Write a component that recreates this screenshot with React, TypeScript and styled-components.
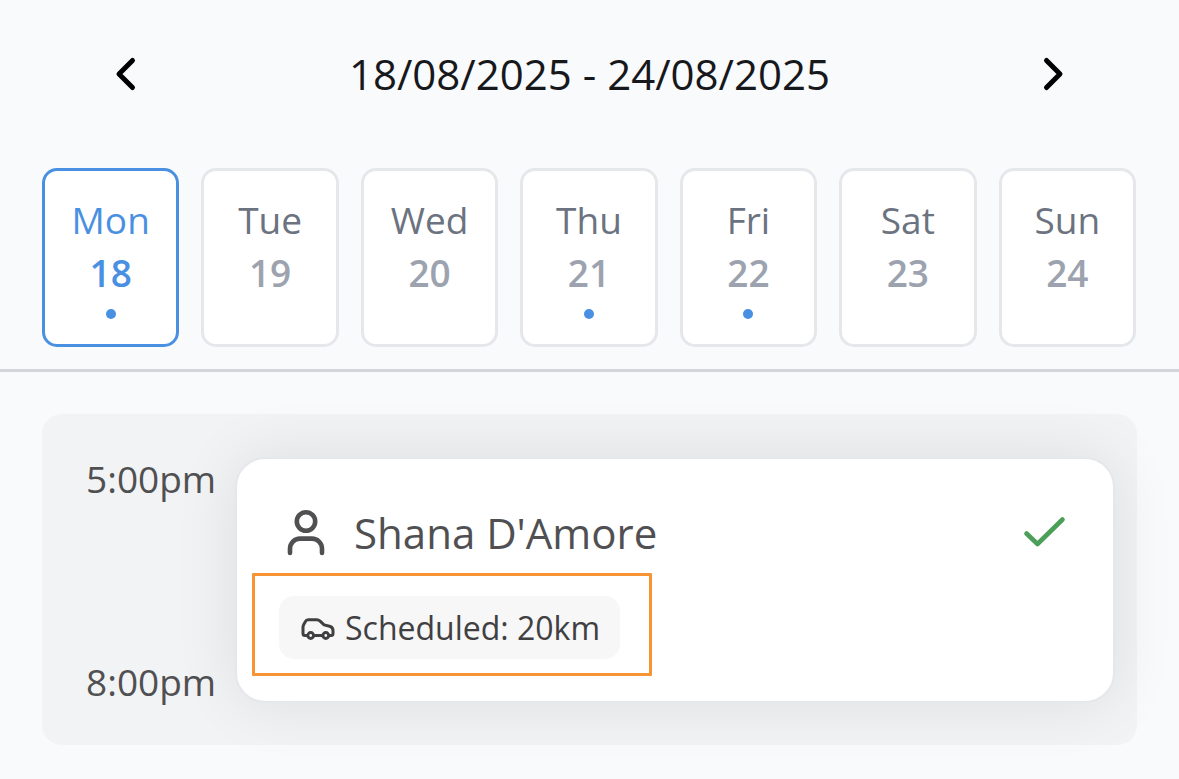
import React from "react";
import styled, { createGlobalStyle } from "styled-components";

const colors = {
  page: "#f9fafc",
  raised: "#f9fafb",
  panel: "#f2f3f5",
  border: "#e5e7eb",
  divider: "#d2d5db",
  blue: "#4a90e2",
  orange: "#f79433",
  green: "#4c9f58",
};

const GlobalStyle = createGlobalStyle`
  *, *::before, *::after { box-sizing: border-box; }
  body {
    margin: 0;
    background: ${colors.page};
    color: #505052;
    font-family: "Open Sans", "Noto Sans", sans-serif;
  }
`;

const Page = styled.div`
  min-height: 100vh;
  overflow-x: hidden;
`;

const Header = styled.header`
  padding: 10px 42px 22px;
  border-bottom: 3px solid ${colors.divider};
`;

const WeekNav = styled.nav`
  display: flex;
  align-items: center;
  justify-content: space-between;
  padding: 0 38px;
`;

const NavButton = styled.button`
  display: flex;
  align-items: center;
  justify-content: center;
  width: 92px;
  height: 92px;
  padding: 0;
  border: 0;
  border-radius: 50%;
  background: ${colors.raised};
  color: #000;
  cursor: pointer;
`;

const WeekRange = styled.h1`
  margin: 0;
  padding: 0 32px;
  border-radius: 64px;
  background: ${colors.raised};
  color: #17181c;
  font-size: 42px;
  font-weight: 400;
  line-height: 128px;
  white-space: nowrap;
`;

const Days = styled.div`
  display: grid;
  grid-template-columns: repeat(7, 1fr);
  gap: 22px;
  margin-top: 30px;
  padding-right: 1px;
`;

const DayButton = styled.button<{ $active: boolean }>`
  display: flex;
  flex-direction: column;
  align-items: center;
  min-width: 0;
  height: 179px;
  padding: 22px 0 0;
  border: 3px solid ${(p) => (p.$active ? colors.blue : colors.border)};
  border-radius: 15px;
  background: #fff;
  color: ${(p) => (p.$active ? colors.blue : "#6b7280")};
  font-family: inherit;
  font-size: 37px;
  line-height: 53px;
  cursor: pointer;
`;

const DayNumber = styled.span<{ $active: boolean }>`
  color: ${(p) => (p.$active ? colors.blue : "#9ca3af")};
  font-weight: 600;
`;

const Dot = styled.span`
  width: 10px;
  height: 10px;
  margin-top: 10px;
  border-radius: 50%;
  background: ${colors.blue};
`;

const Main = styled.main`
  padding: 42px 42px 32px;
`;

const Slot = styled.section`
  display: flex;
  padding: 43px 22px 42px 44px;
  border-radius: 20px;
  background: ${colors.panel};
`;

const Times = styled.div`
  display: flex;
  flex-direction: column;
  justify-content: space-between;
  width: 149px;
  font-size: 37px;
  line-height: 43px;
  white-space: nowrap;
`;

const Card = styled.article`
  flex: 1;
  min-width: 0;
  height: 246px;
  padding: 46px 45px 0 15px;
  border: 2px solid ${colors.border};
  border-radius: 30px;
  background: #fff;
  box-shadow: 0 0 64px rgba(0, 0, 0, 0.09);
`;

const PersonRow = styled.div`
  display: flex;
  align-items: center;
  padding-left: 33px;
`;

const PersonName = styled.h2`
  flex: 1;
  margin: 0 0 0 27px;
  font-size: 42px;
  font-weight: 400;
  line-height: 56px;
  white-space: nowrap;
`;

const Highlight = styled.div`
  width: fit-content;
  margin-top: 12px;
  padding: 20px 29px 14px 24px;
  border: 3px solid ${colors.orange};
  border-radius: 1px;
`;

const Chip = styled.div`
  display: flex;
  align-items: center;
  gap: 9px;
  padding: 0 20px 0 22px;
  border-radius: 15px;
  background: #f7f7f7;
  color: #404042;
  font-size: 32px;
  line-height: 63px;
  white-space: nowrap;
`;

const days = [
  { name: "Mon", date: 18, hasVisit: true },
  { name: "Tue", date: 19, hasVisit: false },
  { name: "Wed", date: 20, hasVisit: false },
  { name: "Thu", date: 21, hasVisit: true },
  { name: "Fri", date: 22, hasVisit: true },
  { name: "Sat", date: 23, hasVisit: false },
  { name: "Sun", date: 24, hasVisit: false },
];

const stroke = {
  fill: "none",
  stroke: "currentColor",
  strokeLinecap: "round" as const,
  strokeLinejoin: "round" as const,
  "aria-hidden": true,
};

const Chevron = ({ d }: { d: string }) => (
  <svg width="54" height="54" viewBox="0 0 54 54" strokeWidth="5" {...stroke}>
    <path d={d} />
  </svg>
);

const UserIcon = () => (
  <svg width="42" height="50" viewBox="0 0 42 50" strokeWidth="4.6" {...stroke}>
    <circle cx="21" cy="13.5" r="9.2" />
    <path d="M5 45v-4.400a10 10 0 0 1 10-10h12a10 10 0 0 1 10 10V45" />
  </svg>
);

const CarIcon = () => (
  <svg width="35" height="24" viewBox="0 0 35 24" strokeWidth="3" {...stroke}>
    <path d="M5.500 19.500H4a2 2 0 0 1-2-2v-6.200c0-1 .2-1.700.6-2.500L4.300 5.700c.7-1.400 1.500-1.900 3-1.900h8.500c1.400 0 2.300.4 3.300 1.300l4 3.800 5.400 1.400c2.500.7 3.500 1.800 3.500 4.200v3a2 2 0 0 1-2 2h-1.500M13.500 19.500h7.500" />
    <circle cx="9.700" cy="19.500" r="2.900" />
    <circle cx="24.800" cy="19.500" r="2.900" />
  </svg>
);

const CheckIcon = () => (
  <svg width="46" height="46" viewBox="0 0 46 46" strokeWidth="4.600" {...stroke} stroke={colors.green}>
    <path d="M40.500 9.500 15.500 34 4.500 23.500" />
  </svg>
);

export default function App() {
  const [selected, setSelected] = React.useState(18);
  return (
    <Page>
      <GlobalStyle />
      <Header>
        <WeekNav aria-label="Week">
          <NavButton type="button" aria-label="Previous week">
            <Chevron d="M33.500 13.500 20 27l13.500 13.500" />
          </NavButton>
          <WeekRange>18/08/2025 - 24/08/2025</WeekRange>
          <NavButton type="button" aria-label="Next week">
            <Chevron d="M20.500 13.500 34 27 20.500 40.500" />
          </NavButton>
        </WeekNav>
        <Days>
          {days.map((day) => {
            const active = day.date === selected;
            return (
              <DayButton
                key={day.date}
                type="button"
                $active={active}
                aria-pressed={active}
                onClick={() => setSelected(day.date)}
              >
                <span>{day.name}</span>
                <DayNumber $active={active}>{day.date}</DayNumber>
                {day.hasVisit && <Dot />}
              </DayButton>
            );
          })}
        </Days>
      </Header>
      <Main>
        <Slot>
          <Times>
            <time dateTime="17:00">5:00pm</time>
            <time dateTime="20:00">8:00pm</time>
          </Times>
          <Card>
            <PersonRow>
              <UserIcon />
              <PersonName>Shana D'Amore</PersonName>
              <CheckIcon />
            </PersonRow>
            <Highlight>
              <Chip>
                <CarIcon />
                <span>Scheduled: 20km</span>
              </Chip>
            </Highlight>
          </Card>
        </Slot>
      </Main>
    </Page>
  );
}
